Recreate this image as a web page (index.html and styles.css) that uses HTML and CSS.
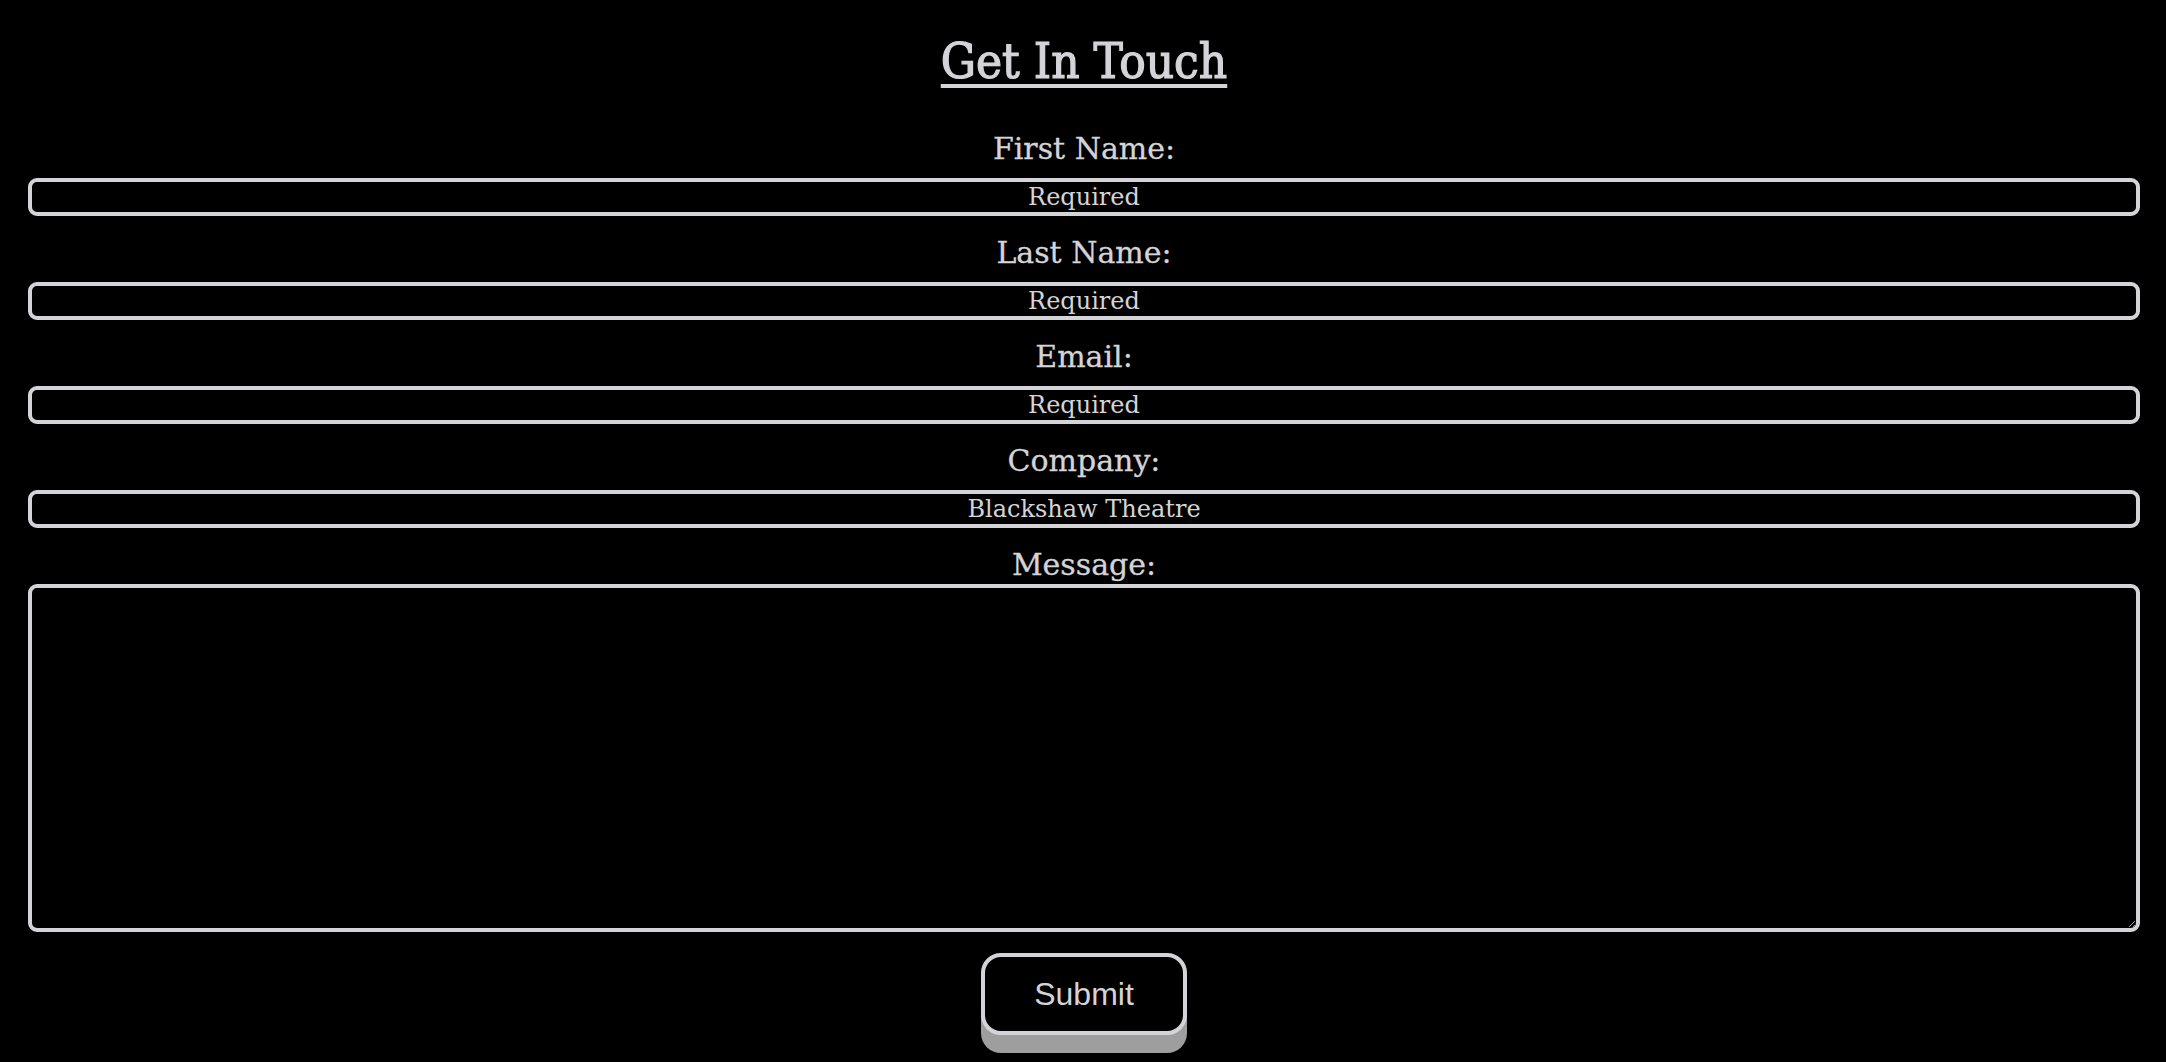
FILE: index.html
```html
<!DOCTYPE html>
<html lang="en">
<head>
<meta charset="utf-8">
<title>Get In Touch</title>
<link rel="stylesheet" href="styles.css">
</head>
<body>
<main class="contact">
  <h1 class="title">Get In Touch</h1>
  <form class="form">
    <label class="label" for="first">First Name:</label>
    <input class="field" id="first" type="text" placeholder="Required">
    <label class="label" for="last">Last Name:</label>
    <input class="field" id="last" type="text" placeholder="Required">
    <label class="label" for="email">Email:</label>
    <input class="field" id="email" type="email" placeholder="Required">
    <label class="label" for="company">Company:</label>
    <input class="field" id="company" type="text" placeholder="Blackshaw Theatre">
    <label class="label label-msg" for="message">Message:</label>
    <textarea class="area" id="message"></textarea>
    <button class="submit" type="button">Submit</button>
  </form>
</main>
</body>
</html>
```
FILE: styles.css
```css
html, body {
  background: #000;
}
body {
  margin: 8px 8px 0;
  color: #d4d4d8;
  font-family: "DejaVu Serif", "Liberation Serif", serif;
}
.contact {
  padding: 0 18px 0 20px;
}
.title {
  margin: 25px 0 22px;
  text-align: center;
  font-family: "DejaVu Serif Condensed", "DejaVu Serif", serif;
  font-stretch: condensed;
  font-weight: normal;
  font-size: 49px;
  line-height: 57px;
  -webkit-text-stroke: 1.2px #d4d4d8;
  text-decoration: underline;
  text-decoration-thickness: 4px;
  text-underline-offset: 6px;
  color: #d4d4d8;
}
.form {
  display: flex;
  flex-direction: column;
  align-items: center;
  padding-bottom: 24px;
}
.label {
  display: block;
  font-size: 30px;
  line-height: 35px;
  margin: 19px 0 12px;
  color: #d4d4d8;
  -webkit-text-stroke: 0.3px #d4d4d8;
}
.label-msg {
  margin-bottom: 2px;
}
.field {
  box-sizing: border-box;
  width: 100%;
  height: 38px;
  margin: 0;
  padding: 0 10px;
  border: 4px solid #d4d4d8;
  border-radius: 9px;
  background: #000;
  color: #d4d4d8;
  font-family: "DejaVu Serif", serif;
  font-size: 24px;
  line-height: 28px;
  text-align: center;
  outline: none;
}
.field::placeholder {
  color: #d4d4d8;
  opacity: 1;
}
.area {
  box-sizing: border-box;
  display: block;
  width: 100%;
  height: 348px;
  margin: 0;
  padding: 6px;
  border: 4px solid #d4d4d8;
  border-radius: 9px;
  background: #000;
  color: #d4d4d8;
  font-family: "DejaVu Serif", serif;
  font-size: 24px;
  outline: none;
}
.submit {
  box-sizing: border-box;
  margin-top: 21px;
  width: 206px;
  height: 82px;
  border: 4px solid #d4d4d8;
  border-radius: 20px;
  background: #000;
  color: #d4d4d8;
  font-family: "Liberation Sans", Arial, sans-serif;
  font-size: 32px;
  box-shadow: 0 18px 0 0 #9e9e9e;
  cursor: pointer;
}
```
